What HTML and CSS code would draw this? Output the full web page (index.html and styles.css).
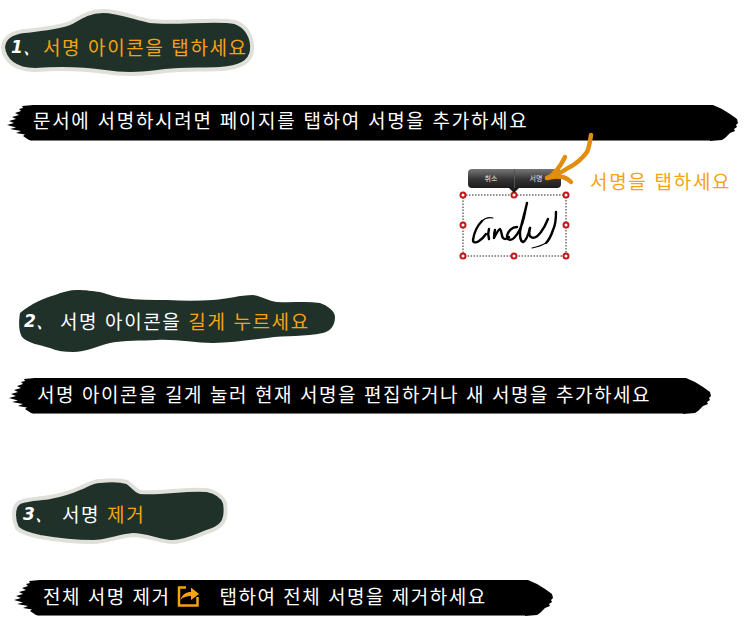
FILE: index.html
```html
<!DOCTYPE html>
<html lang="ko">
<head>
<meta charset="utf-8">
<title>서명 도움말</title>
<link rel="stylesheet" href="styles.css">
</head>
<body>
<svg class="defs" width="0" height="0" aria-hidden="true">
  <symbol id="cap-left" viewBox="0 0 26 36"><polygon points="15,1 26,0 26,36 22,35 16,31 18,29.5 9,28 14,26 3,24 9,22.5 0,20 7,18 2,16 9,14 5,12 12,10 8,8 14,6 12,4 16,3"/></symbol>
  <symbol id="cap-right" viewBox="0 0 28 36"><polygon points="0,0 3,0 12,4 20,9 27,14 28,18 26,20 27,22 24,24 25,26 20,28 15,33 12,35 0,36"/></symbol>
</svg>
<main class="page">
  <section class="step step-one">
    <div class="head head-one">
      <svg class="blob" width="260" height="72" viewBox="0 8 260 72"><path class="blob-ringed" d="M3 47C4 38 10 33 24 31C40 29 60 28 72 22C82 16 90 11 103 11C118 11 135 18 150 21C175 24 215 18 235 22C247 26 253 38 252 50C251 62 240 68 220 69C200 70 185 69 165 71C150 73 130 76 105 72C85 69 60 68 35 70C15 70 4 60 3 47Z"/></svg>
      <span class="num">1、</span>
      <h2 class="title accent">서명 아이콘을 탭하세요</h2>
    </div>
    <div class="bar bar-one">
      <svg class="cap-l"><use href="#cap-left"/></svg>
      <p class="bar-text">문서에 서명하시려면 페이지를 탭하여 서명을 추가하세요</p>
      <svg class="cap-r"><use href="#cap-right"/></svg>
    </div>
    <div class="demo">
      <div class="widget">
        <div class="toolbar"><span class="tool tool-cancel">취소</span><span class="tool tool-sign">서명</span></div>
        <div class="pointer"></div>
        <svg class="signature" width="113" height="71" viewBox="458 190 113 71">
          <rect class="sel" x="463" y="195" width="103" height="61"/>
          <g class="ink">
            <path class="ink-thin" d="M493 218C489 217 485 218 482 221"/>
            <path class="ink-thick" d="M482 221C477 226 474 233 473 240C473 243 476 243 479 241C482 239 484 237 486 234"/>
            <path class="ink-thick" d="M489 229C488 232 488 236 489 239"/>
            <path class="ink-thick" d="M495 230C494 233 494 235 494 238C496 234 498 230 500 229C502 231 501 235 503 238C505 240 507 239 509 237"/>
            <path class="ink-thick" d="M517 227C512 227 508 231 507 236C507 240 511 241 514 238C518 234 522 226 524 217C525 212 526 207 527 203C525 212 521 225 520 232C520 237 520 241 523 242C526 241 528 236 530 228"/>
            <path class="ink-thick" d="M530 228C529 232 529 236 531 237C534 239 538 236 541 232C544 228 546 224 548 219"/>
            <path class="ink-thick" d="M556 212C556 220 555 226 553 230C551 236 549 240 546 243"/>
            <path class="ink-thin" d="M546 243C541 246 537 247 532 248"/>
          </g>
          <g class="handles">
            <circle cx="463" cy="195" r="2.5"/><circle cx="514" cy="195" r="2.5"/><circle cx="566" cy="195" r="2.5"/>
            <circle cx="463" cy="225" r="2.5"/><circle cx="566" cy="225" r="2.5"/>
            <circle cx="463" cy="256" r="2.5"/><circle cx="514" cy="256" r="2.5"/><circle cx="566" cy="256" r="2.5"/>
          </g>
        </svg>
      </div>
      <p class="demo-label">서명을 탭하세요</p>
      <svg class="arrow" width="60" height="60" viewBox="540 130 60 60"><path d="M591 135C590 142 589 148 587 152C582 159 576 164 568 168C562 172 555 176 547 178M565 157C562 163 559 168 555 172C553 175 550 177 547 178C553 176 558 176 563 177C566 178 569 180 571 182"/></svg>
    </div>
  </section>

  <section class="step step-two">
    <div class="head head-two">
      <svg class="blob" width="345" height="66" viewBox="0 288 345 66"><path class="blob-plain" d="M20 313C32 303 44 298 55 295C62 292 70 290 77 290C86 290 92 291 100 292C108 294 115 297 123 298C138 300 152 300 167 300C183 301 198 301 213 300C228 299 240 295 253 295C262 296 268 301 277 302C292 303 306 301 320 303C328 306 335 311 335 317C335 325 331 331 323 333C305 337 286 335 267 338C249 340 231 343 213 343C194 343 176 339 157 340C141 341 125 340 110 343C97 346 86 352 73 352C65 352 57 351 50 348C40 345 27 343 22 337C18 330 19 320 20 313Z"/></svg>
      <span class="num">2、</span>
      <h2 class="title">서명 아이콘을 <em class="accent">길게 누르세요</em></h2>
    </div>
    <div class="bar bar-two">
      <svg class="cap-l"><use href="#cap-left"/></svg>
      <p class="bar-text">서명 아이콘을 길게 눌러 현재 서명을 편집하거나 새 서명을 추가하세요</p>
      <svg class="cap-r"><use href="#cap-right"/></svg>
    </div>
  </section>

  <section class="step step-three">
    <div class="head head-three">
      <svg class="blob" width="235" height="68" viewBox="0 478 235 68"><path class="blob-ringed" d="M14 515C14 508 16 504 20 502C30 498 40 499 50 497C62 495 71 492 80 488C87 485 93 481 100 481C110 480 120 480 127 482C132 485 135 490 140 492C162 494 185 488 207 490C216 492 223 497 225 503C226 510 226 517 223 522C219 528 213 530 207 532C196 536 185 542 173 542C160 542 147 535 133 535C120 536 106 542 93 542C75 542 57 540 40 537C30 535 22 533 17 528C15 524 14 520 14 515Z"/></svg>
      <span class="num">3、</span>
      <h2 class="title">서명 <em class="accent">제거</em></h2>
    </div>
    <div class="bar bar-three">
      <svg class="cap-l"><use href="#cap-left"/></svg>
      <p class="bar-text">전체 서명 제거<svg class="share" width="23" height="22" viewBox="0 0 23 22"><path class="share-box" d="M9 2.500H2V20.500H20.500V12"/><path class="share-arrow" d="M3.500 15C5 9.500 9 7 14 7V2.500L22 9L14 15V11C10 11 6 12 3.500 15Z"/></svg>탭하여 전체 서명을 제거하세요</p>
      <svg class="cap-r"><use href="#cap-right"/></svg>
    </div>
  </section>
</main>
</body>
</html>
```
FILE: styles.css
```css
* { box-sizing: border-box; }
html, body { margin: 0; padding: 0; background: #fff; }
body {
  width: 745px;
  height: 628px;
  overflow: hidden;
  font-family: "Noto Sans CJK KR", "Noto Sans", sans-serif;
  color: #fff;
}
.defs { position: absolute; }
.page { display: flex; flex-direction: column; }
.accent { color: #f6a311; font-style: normal; }

/* Step headings */
.head { position: relative; display: flex; align-items: center; }
.head > * { position: relative; }
.head .blob { position: absolute; left: 0; top: 0; }
.blob-ringed { fill: #20312a; stroke: #dfe0d9; stroke-width: 4; stroke-linejoin: round; }
.blob-plain { fill: #20312a; }
.num {
  flex: none;
  font-family: "DejaVu Sans", sans-serif;
  font-style: italic;
  font-weight: bold;
  font-size: 17px;
  line-height: 24px;
  white-space: pre;
}
.title {
  margin: 0;
  font-size: 19px;
  font-weight: 400;
  line-height: 24px;
  letter-spacing: 1.6px;
  white-space: nowrap;
}
.title em { font-style: normal; }

.step-one { padding-top: 8px; }
.head-one { height: 72px; padding: 6px 0 0 11px; }
.head-one .num { width: 32px; }
.step-two { padding-top: 30px; }
.head-two { height: 66px; padding: 0 0 0 24px; }
.head-two .num { width: 36px; }
.step-three { padding-top: 64px; }
.head-three { height: 68px; padding: 4px 0 0 23px; }
.head-three .num { width: 39px; }

/* Brush bars */
.bar { display: flex; height: 36px; }
.bar svg.cap-l, .bar svg.cap-r { fill: #000; height: 36px; flex: none; display: block; filter: blur(0.5px); }
.bar svg.cap-l { width: 26px; margin-right: -1px; }
.bar svg.cap-r { width: 28px; margin-left: -1px; }
.bar-text {
  position: relative;
  flex: 1;
  margin: 0;
  padding-bottom: 5px;
  background: #000;
  border-bottom: 1px solid #777;
  font-size: 19px;
  line-height: 30px;
  letter-spacing: 1.7px;
  white-space: nowrap;
  display: flex;
  align-items: center;
}
.bar-one { margin: 25px 0 0 7px; width: 731px; }
.bar-one .bar-text { padding-left: 1px; }
.bar-two { margin: 24px 0 0 9px; width: 702px; }
.bar-two .bar-text { padding-left: 3px; padding-bottom: 3px; letter-spacing: 1.56px; }
.bar-three { margin: 34px 0 0 14px; width: 539px; }
.bar-three .bar-text { padding-left: 4px; padding-bottom: 4px; letter-spacing: 1.5px; }
.share { flex: none; margin: 0 20px 0 6px; }
.share-box { fill: none; stroke: #f6a311; stroke-width: 2.5; }
.share-arrow { fill: #f6a311; }

/* Demo area */
.demo { position: relative; height: 90px; margin-top: 27px; display: flex; align-items: flex-start; }
.widget { position: relative; margin-left: 458px; width: 113px; padding-top: 22px; }
.toolbar {
  position: absolute;
  left: 10px;
  top: 1px;
  width: 93px;
  height: 19px;
  display: flex;
  border-radius: 4px;
  background: linear-gradient(#777, #333 55%, #1c1c1c);
}
.tool { display: block; text-align: center; font-size: 7px; line-height: 18px; color: #e8e8e8; }
.tool-cancel { width: 47px; border-right: 1px solid #555; }
.tool-sign { flex: 1; padding-right: 4px; }
.pointer {
  position: absolute;
  left: 51px;
  top: 20px;
  width: 0;
  height: 0;
  border: 5px solid transparent;
  border-bottom: 0;
  border-top-color: #1c1c1c;
}
.signature { display: block; overflow: visible; }
.sel { fill: none; stroke: #222; stroke-width: 1; stroke-dasharray: 1.5 1.5; }
.ink { fill: none; stroke: #000; stroke-linecap: round; stroke-linejoin: round; }
.ink-thick { stroke-width: 2.4; }
.ink-thin { stroke-width: 1.2; }
.handles circle { fill: #fff; stroke: #c3161a; stroke-width: 2; }
.demo-label {
  margin: 0 0 0 19px;
  padding-top: 1px;
  font-size: 19px;
  line-height: 24px;
  letter-spacing: 1.7px;
  color: #f6a311;
  white-space: nowrap;
}
.arrow {
  position: absolute;
  left: 540px;
  top: -38px;
  fill: none;
  stroke: #e18d10;
  stroke-width: 4.5;
  stroke-linecap: round;
  stroke-linejoin: round;
}
```
